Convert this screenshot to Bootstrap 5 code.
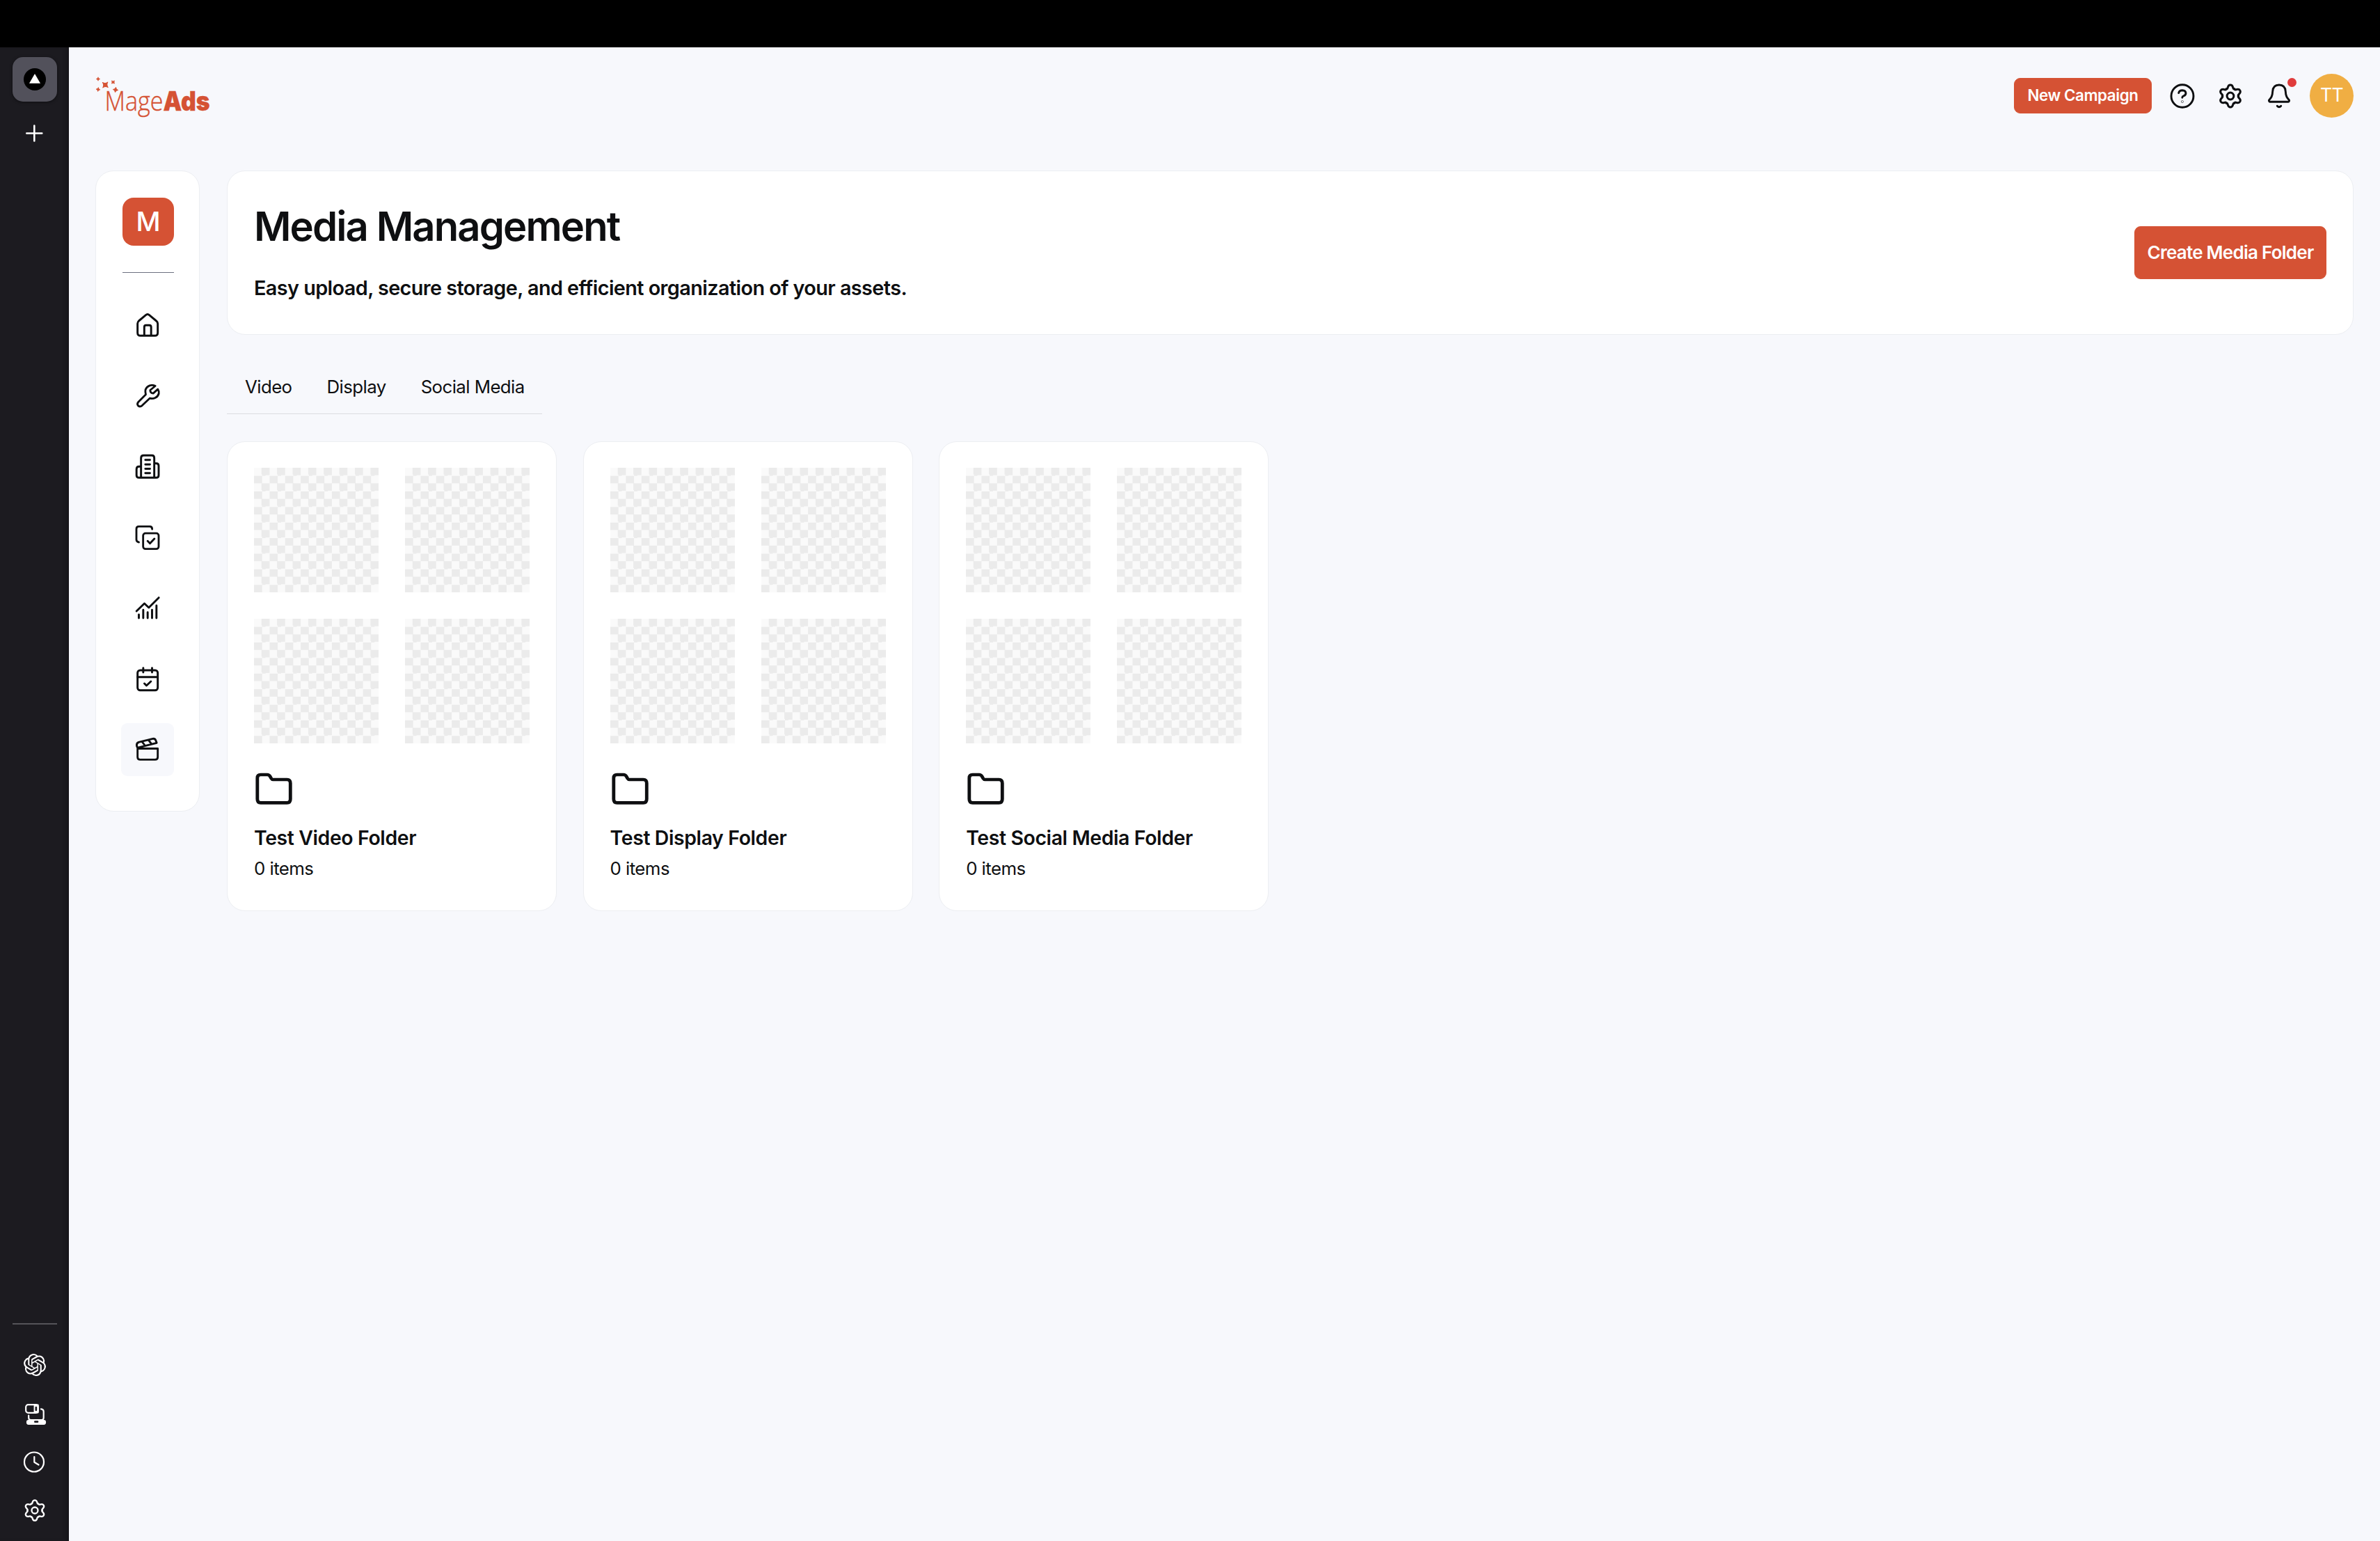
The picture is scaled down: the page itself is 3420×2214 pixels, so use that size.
<!DOCTYPE html>
<html lang="en">
<head>
<meta charset="utf-8">
<meta name="viewport" content="width=device-width, initial-scale=1">
<title>MageAds – Media Management</title>
<link rel="stylesheet" href="https://cdn.jsdelivr.net/npm/bootstrap@5.3.0/dist/css/bootstrap.min.css">
<style>
  :root { --brand: #d55234; --ink: #0e0f11; --canvas: #f7f8fc; --hair: #eceef2; }
  body { font-family: Inter, "Liberation Sans", sans-serif; color: var(--ink); background: var(--canvas); line-height: 1.2; }
  svg { display: block; flex: none; overflow: visible; }
  .ico { fill: none; stroke: currentColor; stroke-linecap: round; stroke-linejoin: round; }
  .topstrip { height: 68px; background: #000; }
  .rail { width: 99px; background: #1c1b20; color: #fff; padding: 14px 17px 27px 18px; box-shadow: inset -6px 0 6px -4px #141317; }
  .rail-tile { width: 64px; height: 64px; border-radius: 15px; background: #52515b; box-shadow: 0 1px 4px rgba(0,0,0,.5); }
  .rail-plus { margin: 33px 0 auto; }
  .rail-line { height: 2px; width: 64px; background: #555459; }
  .page { padding: 0 38px; }
  .page-head { height: 139px; }
  .brand-btn { --bs-btn-color: #fff; --bs-btn-bg: var(--brand); --bs-btn-border-color: var(--brand); --bs-btn-border-radius: 9px; --bs-btn-font-weight: 600; --bs-btn-hover-bg: #bd462b; --bs-btn-hover-color: #fff; white-space: nowrap; padding: 0 0 1px; }
  .btn-campaign { width: 198px; height: 51px; font-size: 22.3px; letter-spacing: -.4px; }
  .btn-create { width: 276px; height: 76px; font-size: 26px; letter-spacing: -.75px; }
  .avatar { width: 63px; height: 63px; background: #f0ae43; font-size: 26.5px; letter-spacing: -.5px; padding-bottom: 1px; }
  .ping { position: absolute; width: 13px; height: 13px; right: -5.5px; top: -7px; background: #e03c3c; }
  .panel { background: #fff; border: 1px solid var(--hair); border-radius: 26px; }
  .sidenav { width: 150px; height: 921px; padding-top: 38px; }
  .org { width: 74px; height: 69px; border-radius: 16px; background: var(--brand); font-size: 38.5px; font-weight: 500; margin-left: 2px; }
  .org-line { width: 74px; height: 1px; background: #6b7080; margin: 38px 0 37px 2px; }
  .side-list { gap: 25.6px; }
  .side-link { width: 76px; height: 76px; border-radius: 9px; color: var(--ink); }
  .side-link.active { background: var(--canvas); }
  .hero { height: 236px; padding: 0 38px 4px 38px; }
  .hero h1 { font-size: 58px; font-weight: 600; letter-spacing: -1.9px; line-height: 70px; margin: 0 0 36px; }
  .hero p { font-size: 28.8px; font-weight: 600; line-height: 36px; margin: 0; letter-spacing: -.57px; }
  .hero .btn-create { margin-top: 4px; }
  .tabs { width: 453px; height: 82px; margin: 32px 0 39px; border-bottom: 1px solid #dcdde1; font-size: 25.8px; letter-spacing: -.57px; padding: 26px 0 0 26px; gap: 50px; --bs-nav-link-color: var(--ink); white-space: nowrap; }
  .tabs .nav-link { padding: 0; line-height: 34px; }
  .folders { gap: 37.6px; }
  .folder { width: 474px; height: 675px; padding: 37px 37px 37px 38px; }
  .thumbs { display: grid; grid-template-columns: 179px 179px; gap: 38px; }
  .blank { height: 179px; background: repeating-conic-gradient(#ebebeb 0 25%, #fafafa 0 50%) 0 0 / 22.375px 22.375px; }
  .folder h2 { font-size: 28.4px; font-weight: 600; line-height: 36px; letter-spacing: -.37px; margin: 30px 0 10px; }
  .folder p { font-size: 25.8px; line-height: 32px; margin: 0; letter-spacing: -.55px; }
  .logo-thin { font: 300 38px "Open Sans", sans-serif; }
  .logo-heavy { font: 900 38px Inter, sans-serif; }
</style>
<script src="https://cdn.jsdelivr.net/npm/bootstrap@5.3.0/dist/js/bootstrap.bundle.min.js"></script>
</head>
<body class="vh-100 d-flex flex-column overflow-hidden">
<svg width="0" height="0" class="position-absolute">
  <defs>
    <path id="tooth" d="M-5.95 -10.1Q-4.6 -9.6 -4 -11.4C-3.2 -13.8 -3.3 -16 0 -16C3.3 -16 3.2 -13.8 4 -11.4Q4.6 -9.6 5.95 -10.1"/>
    <g id="gear">
      <use href="#tooth"/><use href="#tooth" transform="rotate(60)"/><use href="#tooth" transform="rotate(120)"/>
      <use href="#tooth" transform="rotate(180)"/><use href="#tooth" transform="rotate(240)"/><use href="#tooth" transform="rotate(300)"/>
      <circle r="4.9"/>
    </g>
    <path id="spark" d="M0 -5Q.9 -.9 5 0Q.9 .9 0 5Q-.9 .9 -5 0Q-.9 -.9 0 -5Z" stroke-width="1" stroke-linejoin="round"/>
    <path id="folder" d="M174 263Q174 249 188 249H215Q223 249 227 256L232 265Q235 270 240 270H298Q312 270 312 286V354Q312 370 298 370H188Q174 370 174 354Z"/>
  </defs>
</svg>

<div class="topstrip flex-shrink-0"></div>
<div class="d-flex flex-grow-1">
  <aside class="rail d-flex flex-column flex-shrink-0">
    <div class="rail-tile d-flex align-items-center justify-content-center">
      <svg width="32" height="32" viewBox="0 0 32 32"><circle cx="16" cy="16" r="16" fill="#000"/><path d="M16 8L24 21.800H8Z" fill="#fff"/></svg>
    </div>
    <svg class="ico rail-plus" width="64" height="25" viewBox="0 0 64 25" stroke-width="2.600"><path d="M20.300 12.500H42.300M31.300 1.500V23.500"/></svg>
    <div class="rail-line"></div>
    <svg style="margin:42px 0 0 16px" width="32" height="32" viewBox="0 0 24 24" fill="#fff"><path d="M22.2819 9.8211a5.9847 5.9847 0 0 0-.5157-4.9108 6.0462 6.0462 0 0 0-6.5098-2.9A6.0651 6.0651 0 0 0 4.9807 4.1818a5.9847 5.9847 0 0 0-3.9977 2.9 6.0462 6.0462 0 0 0 .7427 7.0966 5.98 5.98 0 0 0 .511 4.9107 6.051 6.051 0 0 0 6.5146 2.9001A5.9847 5.9847 0 0 0 13.2599 24a6.0557 6.0557 0 0 0 5.7718-4.2058 5.9894 5.9894 0 0 0 3.9977-2.9001 6.0557 6.0557 0 0 0-.7475-7.0729zm-9.022 12.6081a4.4755 4.4755 0 0 1-2.8764-1.0408l.1419-.0804 4.7783-2.7582a.7948.7948 0 0 0 .3927-.6813v-6.7369l2.02 1.1686a.071.071 0 0 1 .038.052v5.5826a4.504 4.504 0 0 1-4.4945 4.4944zm-9.6607-4.1254a4.4708 4.4708 0 0 1-.5346-3.0137l.142.0852 4.783 2.7582a.7712.7712 0 0 0 .7806 0l5.8428-3.3685v2.3324a.0804.0804 0 0 1-.0332.0615L9.74 19.9502a4.4992 4.4992 0 0 1-6.1408-1.6464zM2.3408 7.8956a4.485 4.485 0 0 1 2.3655-1.9728V11.6a.7664.7664 0 0 0 .3879.6765l5.8144 3.3543-2.0201 1.1685a.0757.0757 0 0 1-.071 0l-4.8303-2.7865A4.504 4.504 0 0 1 2.3408 7.872zm16.5963 3.8558L13.1038 8.364 15.1192 7.2a.0757.0757 0 0 1 .071 0l4.8303 2.7913a4.4944 4.4944 0 0 1-.6765 8.1042v-5.6772a.79.79 0 0 0-.407-.667zm2.0107-3.0231l-.142-.0852-4.7735-2.7818a.7759.7759 0 0 0-.7854 0L9.409 9.2297V6.8974a.0662.0662 0 0 1 .0284-.0615l4.8303-2.7866a4.4992 4.4992 0 0 1 6.6802 4.66zM8.3065 12.863l-2.02-1.1638a.0804.0804 0 0 1-.038-.0567V6.0742a4.4992 4.4992 0 0 1 7.3757-3.4537l-.142.0805L8.704 5.459a.7948.7948 0 0 0-.3927.6813zm1.0976-2.3654l2.602-1.4998 2.6069 1.4998v2.9994l-2.5974 1.4997-2.6067-1.4997Z"/></svg>
    <svg class="ico" style="margin:38px 0 0 16px" width="34" height="34" viewBox="102 405 102 102" stroke-width="6.500"><rect x="111.500" y="414.500" width="53" height="35" rx="10"/><path d="M149 416H164V448H149Z" fill="#fff"/><path d="M155.500 426V438" stroke="#1c1b20" stroke-width="8"/><path d="M123.500 461V471Q123.500 480 133 480H180Q188 480 188 471V444Q188 434 177 433"/><rect x="117" y="483.500" width="78" height="14" rx="6" fill="#fff"/><path d="M151 488H162" stroke="#1c1b20" stroke-width="8"/></svg>
    <svg class="ico" style="margin:36px 0 0 16px" width="31" height="31" viewBox="0 0 31 31" stroke-width="2.200"><circle cx="15" cy="15.500" r="14"/><path d="M15.300 8V15.800L21.500 19.500"/></svg>
    <svg class="ico" style="margin:37px 0 0 15px" width="34" height="34" viewBox="-18.500 -18.500 37 37" stroke-width="2.500"><use href="#gear"/></svg>
  </aside>

  <div class="page flex-grow-1">
    <header class="page-head d-flex align-items-center">
      <svg width="166" height="64" viewBox="137 105.500 166 64" role="img" aria-label="MageAds" fill="#d55234" stroke="#d55234">
        <use href="#spark" transform="translate(141 113) scale(.55)"/>
        <use href="#spark" transform="translate(151.300 121.500) rotate(42) scale(1.050)"/>
        <use href="#spark" transform="translate(162.500 117.500) rotate(45) scale(.6)"/>
        <use href="#spark" transform="translate(141 128) rotate(8) scale(.6)"/>
        <use href="#spark" transform="translate(166 128.500) rotate(8) scale(.75)"/>
        <text y="158"><tspan class="logo-thin" x="150.500" textLength="84" lengthAdjust="spacingAndGlyphs" stroke-width=".4">Mage</tspan><tspan class="logo-heavy" x="234.500" textLength="67" lengthAdjust="spacingAndGlyphs" stroke-width=".3">Ads</tspan></text>
      </svg>
      <button class="btn brand-btn btn-campaign ms-auto">New Campaign</button>
      <svg class="ico" style="margin-left:25px" width="38" height="38" viewBox="0 0 38 38" stroke-width="2.900"><ellipse cx="19" cy="19" rx="16" ry="16.200"/><path d="M13.700 14.600Q14.600 10.700 19 10.700Q23.800 10.900 24 14.900Q23.900 17.500 21.200 18.700Q18.900 19.600 18.800 21.200"/><circle cx="18.900" cy="27" r=".3"/></svg>
      <svg class="ico" style="margin-left:31px" width="38" height="38" viewBox="-19 -19 38 38" stroke-width="3"><use href="#gear"/></svg>
      <div class="position-relative" style="margin-left:32px">
        <svg class="ico" width="38" height="38" viewBox="0 0 38 38" stroke-width="2.900"><path d="M6 27.300H32A1.700 1.700 0 0 0 33.200 24.500C30.500 21.500 28.600 19.500 28.300 12.500C28 6.500 24.800 3 19 3C13.200 3 10 6.500 9.700 12.500C9.400 19.500 7.500 21.500 4.800 24.500A1.700 1.700 0 0 0 6 27.300ZM16.300 33.200Q19 36.200 21.700 33.200"/></svg>
        <span class="ping rounded-circle"></span>
      </div>
      <div class="avatar rounded-circle text-white d-flex align-items-center justify-content-center" style="margin-left:25px">TT</div>
    </header>

    <div class="d-flex" style="margin-top:38px;gap:39px">
      <nav class="panel sidenav d-flex flex-column align-items-center flex-shrink-0">
        <div class="org text-white d-flex align-items-center justify-content-center flex-shrink-0">M</div>
        <div class="org-line flex-shrink-0"></div>
        <div class="side-list d-flex flex-column">
          <a class="side-link d-flex align-items-center justify-content-center" href="#"><svg class="ico" width="38" height="38" viewBox="188.500 655 114 114" stroke-width="8.800"><path d="M202.500 706Q202.500 699 208 694L238 669Q245.500 662 253 669L283 694Q289.500 699 289.500 706V745Q289.500 758 277 758H215Q202.500 758 202.500 745ZM231.500 757V721Q231.500 713 239 713H253Q261 713 261 721V757"/></svg></a>
          <a class="side-link d-flex align-items-center justify-content-center" href="#"><svg class="ico" width="38" height="38" viewBox="188.500 957.500 114 114" stroke-width="8.500"><path d="M279 971C262 963 242 970 236.500 988Q235 997 238 1008L206 1040C197 1050 206 1065 220 1057L255 1024C272 1029 289 1021 294 1004Q296 994 290 985L270 1003Q257 1002 257 989Z"/></svg></a>
          <a class="side-link d-flex align-items-center justify-content-center" href="#"><svg class="ico" width="38" height="38" viewBox="188.500 1265 114 114" stroke-width="8.800"><path d="M217.500 1371V1286Q217.500 1275 229 1275H264Q274.500 1275 274.500 1286V1371ZM217 1323H209Q198 1323 198 1334V1360Q198 1371 209 1371H283Q293.500 1371 293.500 1360V1320Q293.500 1309 283 1309H275M236 1294.500H256M236 1313.500H256M236 1332.500H256M236 1351.500H256"/></svg></a>
          <a class="side-link d-flex align-items-center justify-content-center" href="#"><svg class="ico" width="38" height="38" viewBox="188.500 70 114 114" stroke-width="8.500"><rect x="226.500" y="109.500" width="67" height="67.500" rx="10"/><path d="M208 148Q197.500 147 197.500 137V91Q197.500 80 208 80H255Q265.500 80 265.500 92M246 143L256 153L275 133"/></svg></a>
          <a class="side-link d-flex align-items-center justify-content-center" href="#"><svg class="ico" width="38" height="38" viewBox="188.500 374 114 114" stroke-width="8.800"><path d="M198 446L232 413L251 431L294 388M208 461V476M227 441V476M246 451V476M265 441V476M284 422V476"/></svg></a>
          <a class="side-link d-flex align-items-center justify-content-center" href="#"><svg class="ico" width="38" height="38" viewBox="188.500 679 114 114" stroke-width="8.800"><rect x="202.500" y="700" width="87" height="86" rx="11"/><path d="M203 729H289M227 690V709M265 690V709M232 757L241 766L260 748"/></svg></a>
          <a class="side-link active d-flex align-items-center justify-content-center" href="#"><svg class="ico" width="38" height="38" viewBox="188.500 984 114 114" stroke-width="8.500"><path d="M202.500 1036.500H289.500V1073Q289.500 1084 278 1084H214Q202.500 1084 202.500 1073ZM202 1033L199 1025Q197 1013 207 1009L268 994Q277 992 281 1001L285 1012L202 1033M222 1007L234 1023M250 1000L262 1016"/></svg></a>
        </div>
      </nav>

      <main class="flex-grow-1">
        <section class="panel hero d-flex align-items-center justify-content-between">
          <div>
            <h1>Media Management</h1>
            <p>Easy upload, secure storage, and efficient organization of your assets.</p>
          </div>
          <button class="btn brand-btn btn-create">Create Media Folder</button>
        </section>

        <nav class="nav tabs flex-nowrap">
          <a class="nav-link" href="#">Video</a>
          <a class="nav-link" href="#">Display</a>
          <a class="nav-link" href="#">Social Media</a>
        </nav>

        <div class="folders d-flex">
          <article class="panel folder">
            <div class="thumbs"><div class="blank"></div><div class="blank"></div><div class="blank"></div><div class="blank"></div></div>
            <svg class="ico" style="margin-top:42px" width="54" height="46" viewBox="160 240 157 138" preserveAspectRatio="none" stroke-width="14"><use href="#folder"/></svg>
            <h2>Test Video Folder</h2>
            <p>0 items</p>
          </article>
          <article class="panel folder">
            <div class="thumbs"><div class="blank"></div><div class="blank"></div><div class="blank"></div><div class="blank"></div></div>
            <svg class="ico" style="margin-top:42px" width="54" height="46" viewBox="160 240 157 138" preserveAspectRatio="none" stroke-width="14"><use href="#folder"/></svg>
            <h2>Test Display Folder</h2>
            <p>0 items</p>
          </article>
          <article class="panel folder">
            <div class="thumbs"><div class="blank"></div><div class="blank"></div><div class="blank"></div><div class="blank"></div></div>
            <svg class="ico" style="margin-top:42px" width="54" height="46" viewBox="160 240 157 138" preserveAspectRatio="none" stroke-width="14"><use href="#folder"/></svg>
            <h2>Test Social Media Folder</h2>
            <p>0 items</p>
          </article>
        </div>
      </main>
    </div>
  </div>
</div>
</body>
</html>
